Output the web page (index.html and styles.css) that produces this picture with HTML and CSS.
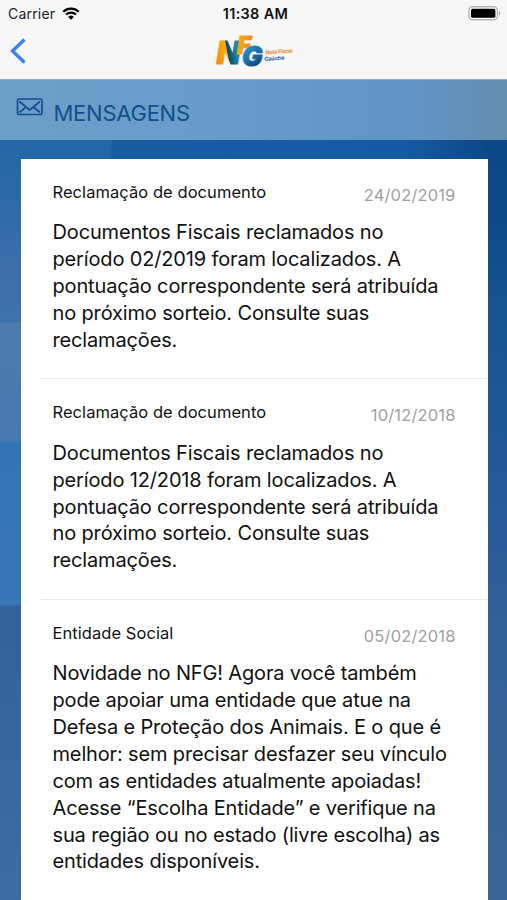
FILE: index.html
```html
<!DOCTYPE html>
<html lang="pt-BR">
<head>
    <meta charset="UTF-8">
    <title>Mensagens</title>
    <link rel="stylesheet" href="styles.css">
</head>
<body>
    <div class="app">
        <div class="status">
            <div class="carrier">
                <span>Carrier</span>
                <svg class="wifi" width="18" height="13" viewBox="0 0 18 13">
                    <path d="M1.3 4.7a11 11 0 0 1 15.4 0" fill="none" stroke="#000" stroke-width="2.2"/>
                    <path d="M4 7.6a7.2 7.2 0 0 1 10 0" fill="none" stroke="#000" stroke-width="2.1"/>
                    <path d="M6.2 9.9a4 4 0 0 1 5.6 0L9 12.7z"/>
                </svg>
            </div>
            <div class="time">11:38 AM</div>
            <div class="power">
                <svg width="33" height="15" viewBox="0 0 33 15">
                    <rect x="1" y=".8" width="28.4" height="13" rx="3.6" fill="#fff" stroke="#b5b5b5" stroke-width="1.4"/>
                    <rect x="3" y="2.8" width="24.4" height="9" rx="1.6"/>
                    <path d="M31 5v4.6c1.3-.6 1.3-4 0-4.6z" fill="#999"/>
                </svg>
            </div>
        </div>
        <div class="nav">
            <svg class="back" width="18" height="28" viewBox="0 0 18 28">
                <path d="M15.5 2.5L3.5 14l12 11.5" fill="none" stroke="#3b83f4" stroke-width="3.4"/>
            </svg>
            <svg class="logo" width="80" height="36" viewBox="0 0 80 36">
                <defs>
                    <linearGradient id="n" gradientUnits="userSpaceOnUse" x1="1" y1="20" x2="27" y2="15">
                        <stop offset="0" stop-color="#f08f0c"/>
                        <stop offset=".42" stop-color="#fbab20"/>
                        <stop offset=".46" stop-color="#0b4a60"/>
                        <stop offset=".75" stop-color="#1c7fae"/>
                        <stop offset="1" stop-color="#2595c8"/>
                    </linearGradient>
                    <linearGradient id="f" gradientUnits="userSpaceOnUse" x1="20" y1="0" x2="39" y2="0">
                        <stop offset="0" stop-color="#fdb020"/>
                        <stop offset="1" stop-color="#ea8a14"/>
                    </linearGradient>
                    <linearGradient id="g" gradientUnits="userSpaceOnUse" x1="29" y1="10" x2="48" y2="32">
                        <stop offset="0" stop-color="#2ba3d6"/>
                        <stop offset="1" stop-color="#06386c"/>
                    </linearGradient>
                </defs>
                <text class="mark"><tspan x="1.500" y="28.500" font-size="31" fill="url(#n)" stroke="url(#n)">N</tspan><tspan x="22" y="19" font-size="24" fill="url(#f)" stroke="url(#f)">F</tspan><tspan x="27" y="31" font-size="27" fill="url(#g)" stroke="url(#g)">G</tspan></text>
                <text class="tag" x="50.500" y="19.500" textLength="27" transform="rotate(-4 50 19)" fill="#ec8c32">Nota Fiscal</text>
                <text class="tag" x="49.500" y="26" textLength="20" transform="rotate(-4 49 25)" fill="#1d639c">Gaúcha</text>
            </svg>
        </div>
        <div class="heading">
            <svg class="mail" width="28" height="20" viewBox="0 0 28 20">
                <g fill="none" stroke="#134f8d" stroke-width="1.7" stroke-linejoin="round">
                    <rect x="1.5" y="1" width="24.5" height="15.5" rx="1.5"/>
                    <path d="M3.5 3.5l10.200 8.500 10.200-8.500M3.500 14.500l6.500-5.500M24 14.500L17.300 9"/>
                </g>
            </svg>
            <h1 class="title">MENSAGENS</h1>
        </div>
        <div class="list">
            <div class="item">
                <div class="head">
                    <span class="subject">Reclamação de documento</span>
                    <span class="date">24/02/2019</span>
                </div>
                <p class="text">Documentos Fiscais reclamados no<br>período 02/2019 foram localizados. A<br>pontuação correspondente será atribuída<br>no próximo sorteio. Consulte suas<br>reclamações.</p>
            </div>
            <div class="item">
                <div class="head">
                    <span class="subject">Reclamação de documento</span>
                    <span class="date">10/12/2018</span>
                </div>
                <p class="text">Documentos Fiscais reclamados no<br>período 12/2018 foram localizados. A<br>pontuação correspondente será atribuída<br>no próximo sorteio. Consulte suas<br>reclamações.</p>
            </div>
            <div class="item">
                <div class="head">
                    <span class="subject">Entidade Social</span>
                    <span class="date">05/02/2018</span>
                </div>
                <p class="text">Novidade no NFG! Agora você também<br>pode apoiar uma entidade que atue na<br>Defesa e Proteção dos Animais. E o que é<br>melhor: sem precisar desfazer seu vínculo<br>com as entidades atualmente apoiadas!<br>Acesse “Escolha Entidade” e verifique na<br>sua região ou no estado (livre escolha) as<br>entidades disponíveis.</p>
            </div>
        </div>
    </div>
</body>
</html>
```
FILE: styles.css
```css
* {
    box-sizing: border-box;
}
body {
    margin: 0;
    font-family: Inter, "Liberation Sans", sans-serif;
    color: #111;
}
.app {
    width: 507px;
    height: 900px;
    overflow: hidden;
    background:
        linear-gradient(#2467a6 140px, #2d69a9 195px, #3d70aa 280px, #3d72ad 322px, #4d7bad 323px, #4778b0 441px, #3474b4 443px, #3775b7 605px, #35619a 606px, #3e6ba2 900px) 0 0 / 21px 100% no-repeat,
        linear-gradient(#0c4788 140px, #0d498a 210px, #185590 330px, #24599a 480px, #315f98 620px, #3c6696 900px) 100% 0 / 20px 100% no-repeat,
        linear-gradient(90deg, #2467a6 110px, #185ca2 113px, #155ba4 400px, #0c4788 490px);
}
.status {
    display: grid;
    grid-template-columns: 1fr auto 1fr;
    align-items: center;
    height: 28px;
    padding: 0 6px 1px 8px;
    background: #f7f7f7;
}
.carrier {
    display: flex;
    align-items: center;
    font-size: 14px;
    letter-spacing: .2px;
    color: #222;
}
.wifi {
    margin-left: 7px;
}
.time {
    padding-left: 2px;
    font-size: 14.5px;
    font-weight: 600;
    letter-spacing: .3px;
}
.power {
    display: flex;
    justify-content: flex-end;
}
.nav {
    display: flex;
    height: 51px;
    background: #f7f7f7;
}
.back {
    margin: 9px 0 0 9px;
}
.logo {
    margin: 7px 0 0 188px;
    overflow: visible;
}
.mark {
    font-weight: 900;
    font-style: italic;
    stroke-width: 1px;
    stroke-linejoin: round;
}
.tag {
    font-size: 5.5px;
    font-weight: 700;
}
.heading {
    display: flex;
    height: 61px;
    padding: 18px 0 0 16px;
    background: linear-gradient(90deg, #6c9fc8, #679bcb 45%, #6295c7 80%, #648db0);
    border-top: 1px solid #8eb2d0;
}
.title {
    margin: 0 0 0 9.5px;
    font-size: 22px;
    line-height: 30px;
    font-weight: 400;
    letter-spacing: -.25px;
    color: #134f8d;
}
.list {
    height: 760px;
    margin: 18.5px 19.5px 0 20.5px;
    background: #fff;
}
.item {
    margin-left: 20px;
    padding: 21px 32px 25px 12px;
    height: 220.5px;
    border-bottom: 1px solid #e8e8e8;
}
.item:last-child {
    height: auto;
    border: none;
}
.head {
    display: flex;
    justify-content: space-between;
    height: 39.9px;
}
.subject {
    font-size: 16.5px;
    line-height: 24px;
    letter-spacing: .06px;
}
.date {
    font-size: 16.5px;
    line-height: 31px;
    letter-spacing: .15px;
    color: #a0a0a0;
}
.text {
    margin: 0;
    font-size: 20px;
    line-height: 26.86px;
    letter-spacing: -.15px;
    white-space: nowrap;
}
```
